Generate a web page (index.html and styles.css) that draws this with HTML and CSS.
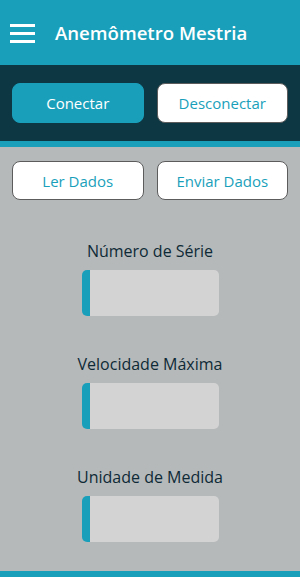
FILE: index.html
```html
<!DOCTYPE html>
<html lang="pt">
<head>
<meta charset="utf-8">
<link rel="stylesheet" href="styles.css">
</head>
<body>
<header class="topbar">
  <svg class="menu" width="25" height="19" viewBox="0 0 25 19"><rect x="0" y="0" width="25" height="3" fill="#fff"/><rect x="0" y="8" width="25" height="3" fill="#fff"/><rect x="0" y="16" width="25" height="3" fill="#fff"/></svg>
  <h1 class="title">Anemômetro Mestria</h1>
</header>
<section class="connect">
  <button class="btn btn-primary">Conectar</button>
  <button class="btn btn-light">Desconectar</button>
</section>
<main class="content">
  <div class="actions">
    <button class="btn btn-light">Ler Dados</button>
    <button class="btn btn-light">Enviar Dados</button>
  </div>
  <div class="field">
    <div class="label">Número de Série</div>
    <div class="box"></div>
  </div>
  <div class="field">
    <div class="label">Velocidade Máxima</div>
    <div class="box"></div>
  </div>
  <div class="field">
    <div class="label">Unidade de Medida</div>
    <div class="box"></div>
  </div>
</main>
<footer class="bottombar"></footer>
</body>
</html>
```
FILE: styles.css
```css
* { box-sizing: border-box; }
html, body { margin: 0; padding: 0; }
body {
  width: 300px;
  height: 577px;
  font-family: "Open Sans", "Noto Sans", sans-serif;
  background: #b5b9ba;
  display: flex;
  flex-direction: column;
  overflow: hidden;
}
.topbar {
  flex-shrink: 0;
  height: 65px;
  background: #1a9fbb;
  display: flex;
  align-items: center;
  padding-left: 10px;
}
.menu { display: block; margin-top: 2px; }
.title {
  margin: 0 0 0 20px;
  color: #fff;
  font-size: 18.6px;
  font-weight: 600;
  line-height: 24px;
}
.connect {
  flex-shrink: 0;
  height: 82px;
  background: #0d3743;
  border-bottom: 6px solid #1a9fbb;
  padding: 18px 12px 0 12px;
  display: grid;
  grid-template-columns: 1fr 1fr;
  column-gap: 13px;
  align-items: start;
}
.btn {
  height: 40px;
  border-radius: 8px;
  font-family: "Open Sans", "Noto Sans", sans-serif;
  font-size: 15px;
  padding: 0;
  margin: 0;
}
.btn-primary {
  background: #1a9fbb;
  color: #fff;
  border: 1px solid #1a9fbb;
}
.btn-light {
  background: #fff;
  color: #1a9fbb;
  border: 1px solid #5c5c5c;
}
.content {
  flex: 1 1 auto;
  min-height: 0;
  overflow: hidden;
  padding: 14px 12px 0 12px;
  display: flex;
  flex-direction: column;
  align-items: center;
}
.actions {
  flex-shrink: 0;
  width: 100%;
  display: grid;
  grid-template-columns: 1fr 1fr;
  column-gap: 13px;
  margin-bottom: 41px;
}
.actions .btn { height: 39px; }
.field {
  flex-shrink: 0;
  display: flex;
  flex-direction: column;
  align-items: center;
  margin-bottom: 38px;
}
.label {
  color: #0e2a36;
  font-size: 16px;
  line-height: 20px;
  margin-bottom: 9px;
}
.box {
  width: 137px;
  height: 46px;
  background: #d3d3d3;
  border-left: 8px solid #1a9fbb;
  border-radius: 5px;
}
.bottombar {
  flex-shrink: 0;
  height: 6px;
  background: #1a9fbb;
}
```
